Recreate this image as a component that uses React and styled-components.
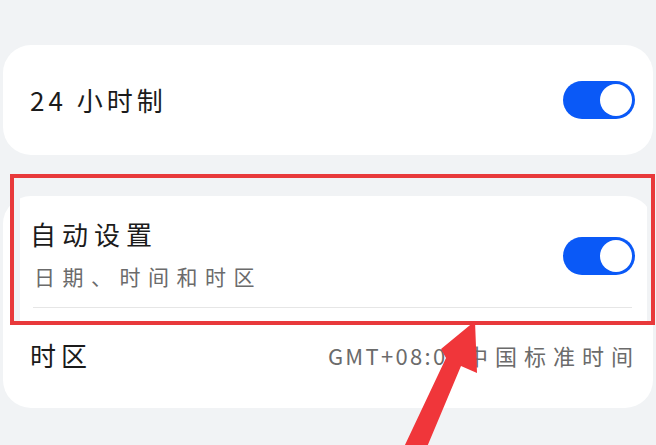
import React from "react";
import styled, { createGlobalStyle } from "styled-components";

const GlobalStyle = createGlobalStyle`
  html, body {
    margin: 0;
    padding: 0;
    background: #f1f3f5;
  }
  body {
    font-family: "Noto Sans CJK SC", "Noto Sans", sans-serif;
    color: #1b1b1b;
  }
`;

const Page = styled.div`
  position: relative;
  width: 656px;
  height: 445px;
  overflow: hidden;
  box-sizing: border-box;
  padding: 45px 3px 0 3px;
  display: flex;
  flex-direction: column;
  gap: 41px;
`;

const Card = styled.div`
  background: #fff;
  border-radius: 28px;
  padding: 0 18px 0 27px;
  display: flex;
  flex-direction: column;
`;

const Row = styled.div`
  display: flex;
  align-items: center;
  justify-content: space-between;
  height: ${(p) => p.height}px;
  box-sizing: border-box;
  padding-bottom: ${(p) => p.shift || 0}px;
`;

const TextCol = styled.div`
  display: flex;
  flex-direction: column;
  gap: 9px;
  padding-top: 4px;
`;

const Title = styled.div`
  font-size: 26px;
  line-height: 36px;
  letter-spacing: ${(p) => p.spacing || 4}px;
  font-weight: 400;
  color: #1b1b1b;
`;

const Sub = styled.div`
  font-size: 21px;
  line-height: 30px;
  letter-spacing: 7.5px;
  color: #6b6b6b;
  margin-left: 4px;
`;

const Value = styled.div`
  font-size: 22px;
  line-height: 30px;
  color: #6b6b6b;
  margin-right: -5px;
  display: flex;
  align-items: baseline;
`;

const Latin = styled.span`
  letter-spacing: 2.3px;
  margin-right: 4px;
`;

const Han = styled.span`
  letter-spacing: 7px;
`;

const Divider = styled.div`
  height: 1px;
  background: #e6e6e6;
  margin: 0 3px 0 3px;
`;

const Track = styled.div`
  width: 72px;
  height: 38px;
  border-radius: 19px;
  background: #0a59f7;
  position: relative;
  flex-shrink: 0;
  margin-top: ${(p) => p.offset || 0}px;

  &::after {
    content: "";
    position: absolute;
    right: 3px;
    top: 3px;
    width: 32px;
    height: 32px;
    border-radius: 50%;
    background: #fff;
  }
`;

const Highlight = styled.div`
  position: absolute;
  left: 10px;
  top: 174px;
  width: 645px;
  height: 151px;
  box-sizing: border-box;
  border: 4px solid #e8393b;
  box-shadow: inset 6px 0 0 #f1f3f5, inset -4px 0 0 #f1f3f5;
  pointer-events: none;
`;

const Arrow = styled.svg`
  position: absolute;
  left: 0;
  top: 0;
  pointer-events: none;
`;

const Toggle = ({ offset }) => <Track offset={offset} />;

export default function App() {
  return (
    <>
      <GlobalStyle />
      <Page>
        <Card>
          <Row height={110}>
            <Title spacing={4}>24 小时制</Title>
            <Toggle />
          </Row>
        </Card>
        <Card>
          <Row height={111}>
            <TextCol>
              <Title spacing={6}>自动设置</Title>
              <Sub>日期、时间和时区</Sub>
            </TextCol>
            <Toggle offset={8} />
          </Row>
          <Divider />
          <Row height={100} shift={6}>
            <Title spacing={5}>时区</Title>
            <Value>
              <Latin>GMT+08:00</Latin>
              <Han>中国标准时间</Han>
            </Value>
          </Row>
        </Card>
        <Highlight />
        <Arrow width="656" height="445" viewBox="0 0 656 445">
          <polygon
            points="475,321 477,373 461,366 427,447 404,447 446,358 441,349"
            fill="#f0363a"
          />
        </Arrow>
      </Page>
    </>
  );
}
